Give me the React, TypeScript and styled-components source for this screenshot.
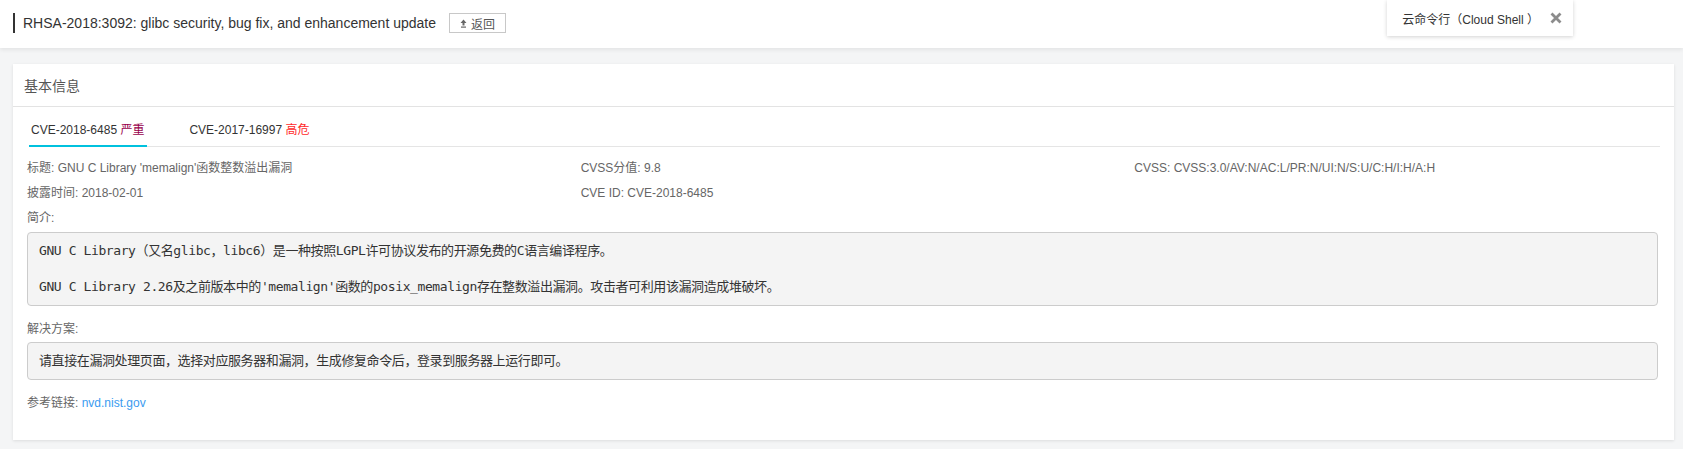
import styled, { createGlobalStyle } from "styled-components";

const GlobalStyle = createGlobalStyle`
  html, body {
    margin: 0;
    padding: 0;
    background: #f4f5f6;
    font-family: "Liberation Sans", "Noto Sans CJK SC", sans-serif;
    color: #666;
  }
`;

const Page = styled.div`
  position: relative;
  width: 1683px;
  height: 449px;
  overflow: hidden;
`;

const Header = styled.header`
  height: 48px;
  box-sizing: border-box;
  padding: 0 0 2px 13px;
  display: flex;
  align-items: center;
  background: #fff;
  box-shadow: 0 2px 4px rgba(0, 0, 0, 0.07);
`;

const Title = styled.h1`
  margin: 0;
  padding-left: 8px;
  border-left: 2px solid #333;
  height: 20px;
  line-height: 20px;
  font-size: 14px;
  font-weight: normal;
  color: #333;
`;

const BackButton = styled.button`
  margin-left: 13px;
  height: 20px;
  padding: 0 10px;
  display: flex;
  align-items: center;
  gap: 4px;
  border: 1px solid #c8c8c8;
  border-radius: 0;
  background: #fff;
  font-family: inherit;
  font-size: 12px;
  color: #555;
`;

const ShellTab = styled.div`
  position: absolute;
  top: 0;
  right: 110px;
  height: 36px;
  padding: 0 11px 0 15px;
  display: flex;
  align-items: center;
  gap: 11px;
  background: #fff;
  box-shadow: 0 1px 4px rgba(0, 0, 0, 0.18);
  font-size: 12px;
  color: #333;
`;

const Card = styled.section`
  margin: 16px 9px 9px 13px;
  height: 376px;
  box-sizing: border-box;
  background: #fff;
  box-shadow: 0 1px 3px rgba(0, 0, 0, 0.1);
`;

const CardHead = styled.div`
  height: 42px;
  line-height: 44px;
  padding-left: 11px;
  border-bottom: 1px solid #e3e3e3;
  font-size: 14px;
  color: #555;
`;

const TabBar = styled.div`
  margin: 0 14px 0 16px;
  padding-top: 14px;
  display: flex;
  border-bottom: 1px solid #e5e5e5;
`;

const Tab = styled.div<{ $active?: boolean }>`
  margin-right: 40px;
  margin-bottom: -1px;
  padding: 0 3px 6px 2px;
  line-height: 18px;
  font-size: 12px;
  color: #333;
  border-bottom: 2px solid ${(p) => (p.$active ? "#00c1de" : "transparent")};
`;

const Level = styled.span<{ $tone: "critical" | "high" }>`
  color: ${(p) => (p.$tone === "critical" ? "#99004d" : "#ff2a2a")};
`;

const InfoGrid = styled.div`
  margin-top: 12px;
  display: grid;
  grid-template-columns: repeat(3, 1fr);
  row-gap: 7px;
`;

const Field = styled.div`
  padding-left: 14px;
  line-height: 18px;
  font-size: 12px;
  color: #666;
`;

const Body = styled.div`
  padding: 7px 16px 0 14px;
`;

const Label = styled.div`
  line-height: 18px;
  font-size: 12px;
  color: #666;
`;

const Pre = styled.pre<{ $gap?: number }>`
  margin: ${(p) => p.$gap ?? 5}px 0 14px;
  padding: 9px 11px;
  background: #f4f4f4;
  border: 1px solid #ccc;
  border-radius: 4px;
  font-family: "DejaVu Sans Mono", "Noto Sans CJK SC", monospace;
  font-size: 13px;
  letter-spacing: -0.4px;
  line-height: 18px;
  color: #333;
  white-space: pre-wrap;
`;

const Link = styled.a`
  color: #3a9bf0;
  text-decoration: none;
`;

const UpIcon = () => (
  <svg width="7" height="9" viewBox="0 0 7 9">
    <path d="M3.5 0.5 L6.5 4 H4.5 V6.5 H2.5 V4 H0.5 Z" fill="#666" />
    <rect x="1" y="7.5" width="5" height="1.2" fill="#666" />
  </svg>
);

const CloseIcon = () => (
  <svg width="12" height="12" viewBox="0 0 12 12">
    <path d="M1.5 1.5 L10.5 10.5 M10.5 1.5 L1.5 10.5" stroke="#8c8c8c" strokeWidth="2.8" />
  </svg>
);

export default function App() {
  return (
    <Page>
      <GlobalStyle />
      <Header>
        <Title>RHSA-2018:3092: glibc security, bug fix, and enhancement update</Title>
        <BackButton>
          <UpIcon />
          返回
        </BackButton>
      </Header>
      <ShellTab>
        <span>云命令行（Cloud Shell ）</span>
        <CloseIcon />
      </ShellTab>
      <Card>
        <CardHead>基本信息</CardHead>
        <TabBar>
          <Tab $active>
            CVE-2018-6485 <Level $tone="critical">严重</Level>
          </Tab>
          <Tab>
            CVE-2017-16997 <Level $tone="high">高危</Level>
          </Tab>
        </TabBar>
        <InfoGrid>
          <Field>标题: GNU C Library 'memalign'函数整数溢出漏洞</Field>
          <Field>CVSS分值: 9.8</Field>
          <Field>CVSS: CVSS:3.0/AV:N/AC:L/PR:N/UI:N/S:U/C:H/I:H/A:H</Field>
          <Field>披露时间: 2018-02-01</Field>
          <Field>CVE ID: CVE-2018-6485</Field>
          <Field />
        </InfoGrid>
        <Body>
          <Label>简介:</Label>
          <Pre>
            {"GNU C Library（又名glibc，libc6）是一种按照LGPL许可协议发布的开源免费的C语言编译程序。\n\nGNU C Library 2.26及之前版本中的'memalign'函数的posix_memalign存在整数溢出漏洞。攻击者可利用该漏洞造成堆破坏。"}
          </Pre>
          <Label>解决方案:</Label>
          <Pre $gap={4}>请直接在漏洞处理页面，选择对应服务器和漏洞，生成修复命令后，登录到服务器上运行即可。</Pre>
          <Label>
            参考链接: <Link href="#">nvd.nist.gov</Link>
          </Label>
        </Body>
      </Card>
    </Page>
  );
}
